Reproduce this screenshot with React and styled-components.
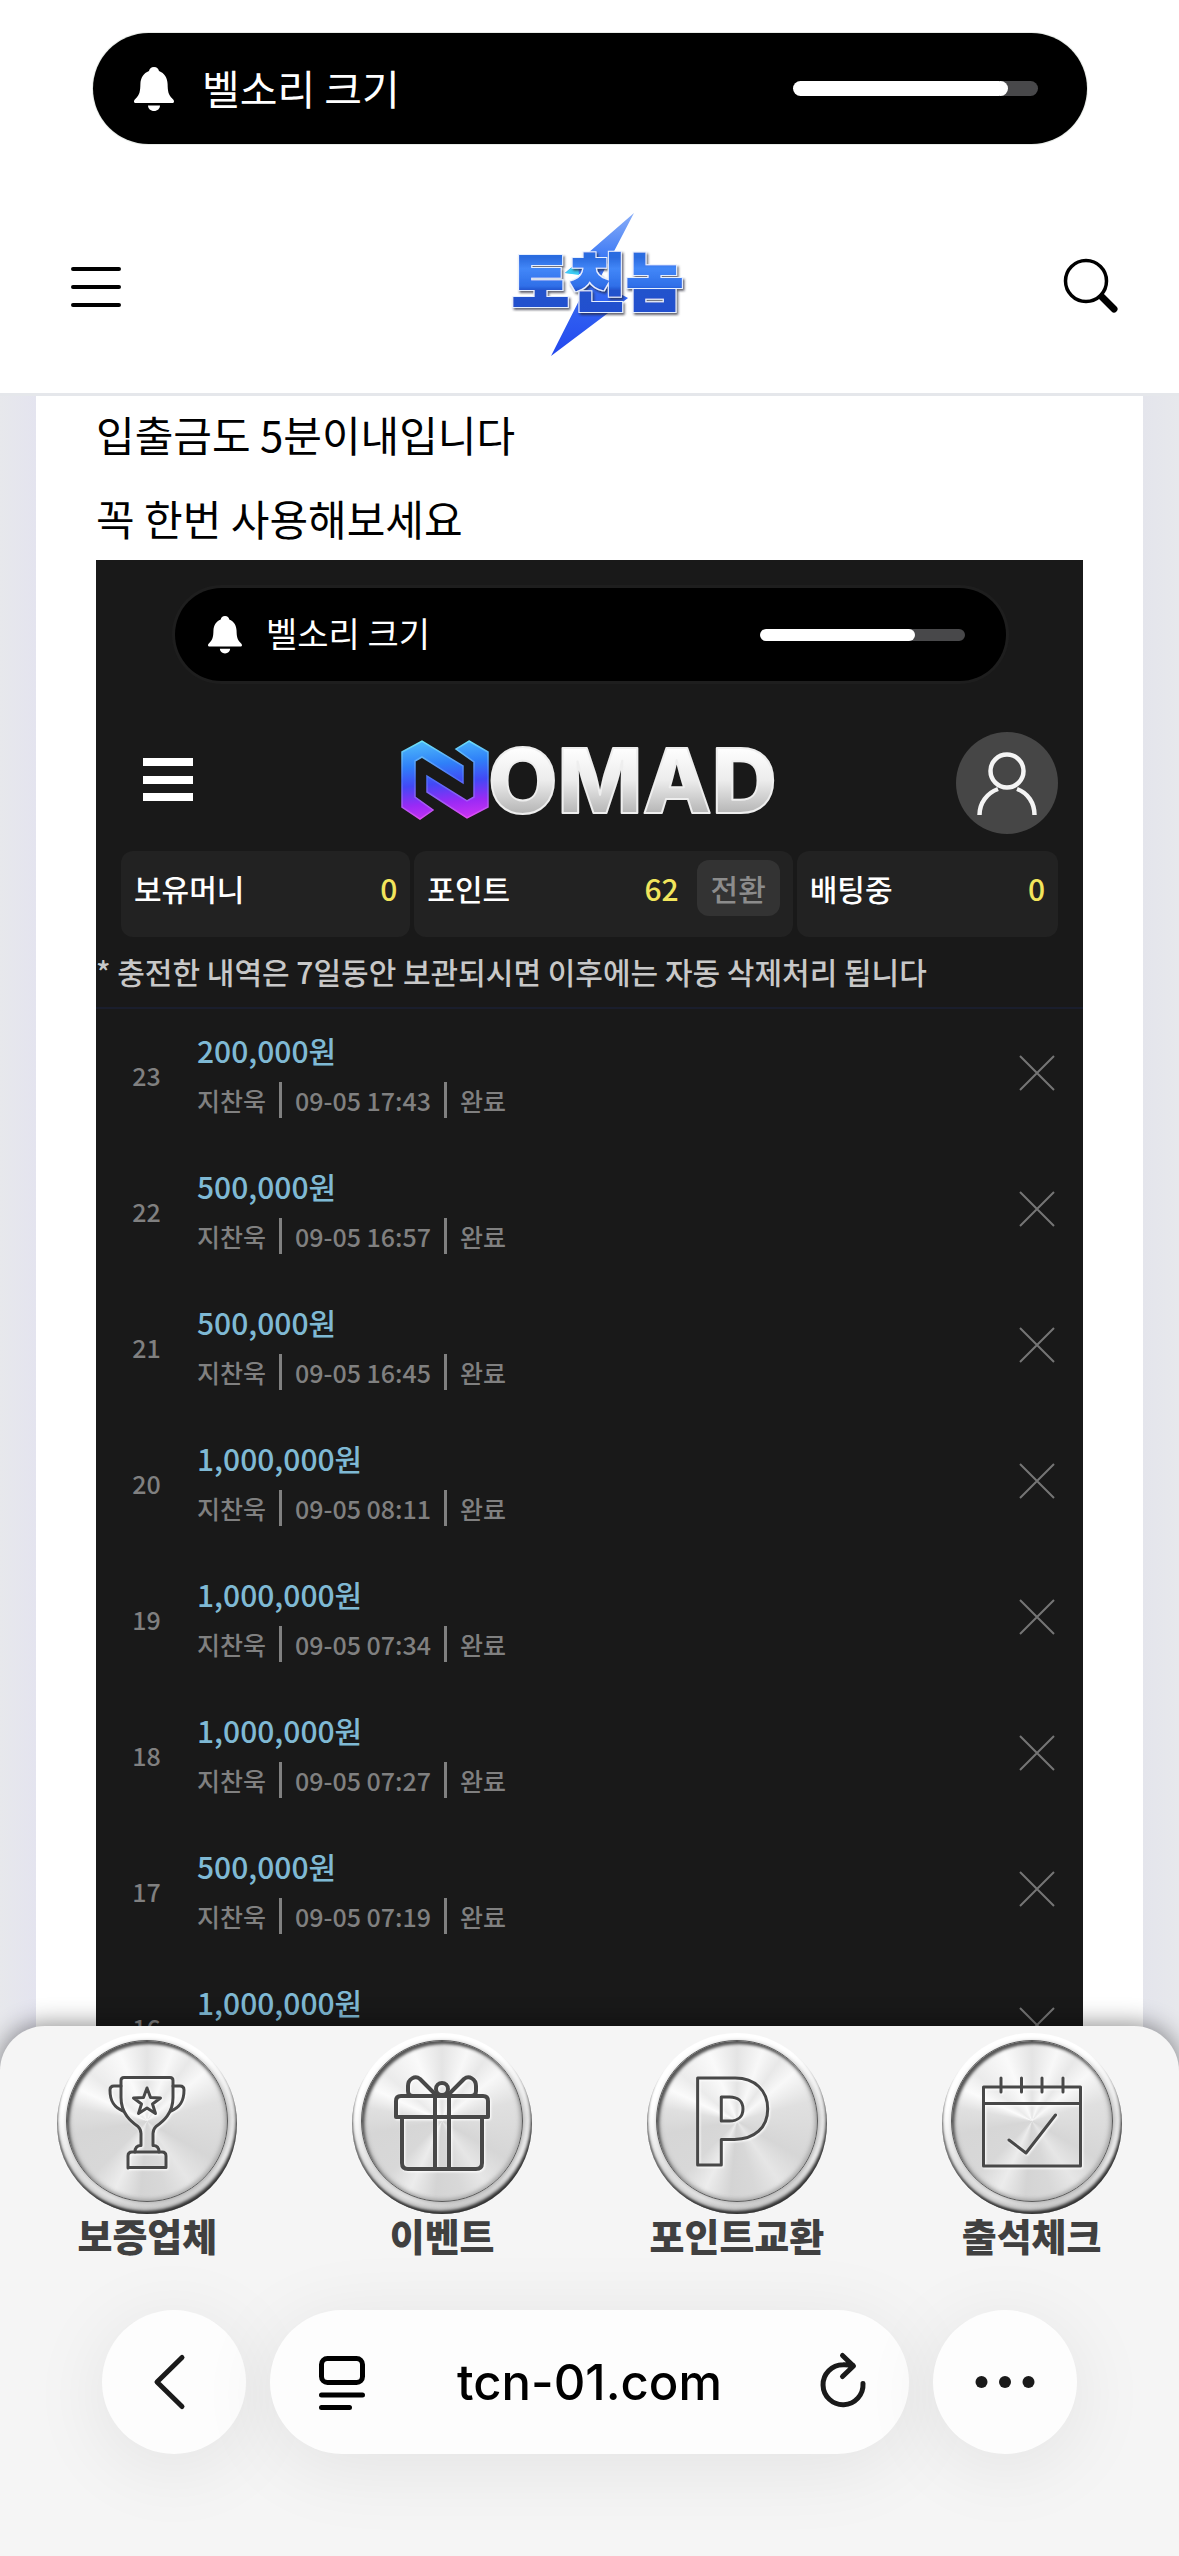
import React, { useState } from 'react'
import styled, { createGlobalStyle } from 'styled-components'

const deposits = [
    { no: 23, amount: '200,000원', date: '09-05 17:43' },
    { no: 22, amount: '500,000원', date: '09-05 16:57' },
    { no: 21, amount: '500,000원', date: '09-05 16:45' },
    { no: 20, amount: '1,000,000원', date: '09-05 08:11' },
    { no: 19, amount: '1,000,000원', date: '09-05 07:34' },
    { no: 18, amount: '1,000,000원', date: '09-05 07:27' },
    { no: 17, amount: '500,000원', date: '09-05 07:19' },
    { no: 16, amount: '1,000,000원', date: '09-05 07:11' },
]

const BellIcon = ({ size }) => (
    <svg width={size} height={size * 1.1} viewBox="0 0 40 44" fill="#fff">
        <path d="M20 0c3 0 4.600 1.800 5 4 5.500 2 8.400 7 8.600 13 .2 7 .6 10.500 4.600 14.500C39.400 32.700 40 33.500 40 34.500S39.200 36 38 36H2c-1.200 0-2-.5-2-1.500s.6-1.800 1.800-3C5.800 27.500 6.200 24 6.400 17 6.600 11 9.500 6 15 4c.4-2.200 2-4 5-4z" />
        <path d="M14 38.500h12c0 3-2.500 5.500-6 5.500s-6-2.500-6-5.500z" />
    </svg>
)

const Ringer = ({ small, initial }) => {
    const [volume, setVolume] = useState(initial)
    return (
        <Pill $small={small}>
            <BellIcon size={small ? 34 : 40} />
            <PillLabel $small={small}>벨소리 크기</PillLabel>
            <Slider
                type="range"
                aria-label="벨소리 크기"
                $small={small}
                value={volume}
                onChange={e => setVolume(Number(e.target.value))}
                style={{ '--volume': volume / 100 }}
            />
        </Pill>
    )
}

const SiteLogo = () => (
    <svg width="200" height="150" viewBox="0 0 200 150" aria-label="토친놈">
        <defs>
            <linearGradient id="bolt" x1="0" y1="0" x2="0" y2="1">
                <stop offset="0" stopColor="#8aaef8" />
                <stop offset="0.3" stopColor="#3f7bf5" />
                <stop offset="1" stopColor="#2348ee" />
            </linearGradient>
            <linearGradient id="word" gradientUnits="userSpaceOnUse" x1="0" y1="47" x2="0" y2="101">
                <stop offset="0" stopColor="#2c6ce0" />
                <stop offset="0.2" stopColor="#4287f8" />
                <stop offset="0.52" stopColor="#2f6fe8" />
                <stop offset="0.6" stopColor="#2252cc" />
                <stop offset="1" stopColor="#2350cf" />
            </linearGradient>
            <filter id="wordEdge" x="-10%" y="-10%" width="120%" height="130%">
                <feMorphology in="SourceAlpha" operator="dilate" radius="1" result="edge" />
                <feFlood floodColor="#e6f0ff" />
                <feComposite in2="edge" operator="in" result="outline" />
                <feMerge result="word">
                    <feMergeNode in="outline" />
                    <feMergeNode in="SourceGraphic" />
                </feMerge>
                <feDropShadow in="word" dx="1.500" dy="2" stdDeviation="0.8" floodColor="#223" floodOpacity="0.7" />
            </filter>
        </defs>
        <path d="M142 2 73 62l27 2-41 81 77-58-30-16z" fill="url(#bolt)" />
        <path d="M86 51 73 62l14 2z" fill="#3ccdf5" />
        <LogoWord x="20" y="95" filter="url(#wordEdge)">토친놈</LogoWord>
    </svg>
)

const NomadLogo = () => (
    <svg width="378" height="90" viewBox="0 0 378 90" aria-label="NOMAD">
        <defs>
            <linearGradient id="mark" gradientUnits="userSpaceOnUse" x1="40" y1="2" x2="48" y2="80">
                <stop offset="0" stopColor="#4db8fb" />
                <stop offset="0.3" stopColor="#2f80f8" />
                <stop offset="0.55" stopColor="#4348f5" />
                <stop offset="0.8" stopColor="#9a2af5" />
                <stop offset="1" stopColor="#c632f2" />
            </linearGradient>
            <linearGradient id="markEdge" gradientUnits="userSpaceOnUse" x1="40" y1="2" x2="44" y2="80">
                <stop offset="0" stopColor="#6fe6f6" />
                <stop offset="0.5" stopColor="#4a6cf8" />
                <stop offset="1" stopColor="#e04cf2" />
            </linearGradient>
            <linearGradient id="steel" gradientUnits="userSpaceOnUse" x1="0" y1="9" x2="0" y2="76">
                <stop offset="0" stopColor="#fff" />
                <stop offset="0.5" stopColor="#ececec" />
                <stop offset="1" stopColor="#b4b4b4" />
            </linearGradient>
        </defs>
        <g fill="url(#mark)" stroke="url(#markEdge)" strokeWidth="1.500">
            <path d="M1 14 21 3l41 25v17L21 19l-7 4v36l18 13-13 9L1 69z" />
            <path d="M68 3l19 11v55L66 80 26 54V38l40 25 7-4V24L55 11z" />
        </g>
        <NomadWord x="87" y="75">OMAD</NomadWord>
    </svg>
)

const TrophyIcon = () => (
    <Engraving viewBox="0 0 160 160">
        <path d="M57 36.500h46q3 0 3 3v17c0 16-10 24-17 29-2 2-3 4-3 7v12q6 0 6 6.500M54 39.500q0-3 3-3M54 39.500v17c0 16 10 24 17 29 2 2 3 4 3 7v12q-6 0-6 6.500" />
        <path d="M54 45h-7q-4 0-4 4c0 10 3 17 13 21M106 45h7q4 0 4 4c0 10-3 17-13 21" />
        <path d="M61 127v-12q0-4 4-4h30q4 0 4 4v11.500H61" />
        <path d="m80 47 3.500 9.500 10 .5-8 6 3 9.500-8.500-5.500-8.500 5.500 3-9.500-8-6 10-.5z" />
    </Engraving>
)

const GiftIcon = () => (
    <Engraving viewBox="0 0 160 160" $bold>
        <path d="M34 76V60q0-5 5-5h82q5 0 5 5v16z" />
        <path d="M40 76v46q0 6 6 6h68q6 0 6-6V76M73 55v73M87 55v73" />
        <path d="M73 53 58 38c-5-4-12 0-12 7v5q0 5 5 5M87 53l15-15c5-4 12 0 12 7v5q0 5-5 5" />
        <circle cx="80" cy="48" r="6" />
    </Engraving>
)

const PointIcon = () => (
    <Engraving viewBox="0 0 160 160">
        <PointLetter x="35" y="124">P</PointLetter>
    </Engraving>
)

const CalendarIcon = () => (
    <Engraving viewBox="0 0 160 160">
        <path d="M31.500 46h97v79h-97zM31.500 62.500h97M49 37v14M69.500 37v14M90 37v14M111 37v14" />
        <path d="m57 99 17 13 29.500-38" />
    </Engraving>
)

const shortcuts = [
    { label: '보증업체', icon: TrophyIcon },
    { label: '이벤트', icon: GiftIcon },
    { label: '포인트교환', icon: PointIcon },
    { label: '출석체크', icon: CalendarIcon },
]

const Deposit = ({ no, amount, date }) => (
    <DepositRow>
        <DepositNo>{no}</DepositNo>
        <div>
            <Amount>{amount}</Amount>
            <Meta>
                <MetaItem>지찬욱</MetaItem>
                <MetaItem>{date}</MetaItem>
                <MetaItem>완료</MetaItem>
            </Meta>
        </div>
        <DeleteButton aria-label={`${no} 삭제`}>
            <svg width="36" height="36" viewBox="0 0 36 36" stroke="#757575" strokeWidth="2">
                <path d="m1 1 34 34M35 1 1 35" />
            </svg>
        </DeleteButton>
    </DepositRow>
)

const App = () => (
    <Screen>
        <GlobalStyle />
        <StatusArea>
            <Ringer initial={87} />
        </StatusArea>
        <SiteHeader>
            <IconButton aria-label="메뉴">
                <svg width="50" height="42" viewBox="0 0 50 42" stroke="#000" strokeWidth="4" strokeLinecap="round">
                    <path d="M2 4h46M2 22h46M2 40h46" />
                </svg>
            </IconButton>
            <SiteLogo />
            <IconButton aria-label="검색">
                <svg width="56" height="56" viewBox="0 0 56 56" fill="none" stroke="#000" strokeLinecap="round">
                    <circle cx="23" cy="23" r="20.500" strokeWidth="3.500" />
                    <path d="m39 39 12 12" strokeWidth="7" />
                </svg>
            </IconButton>
        </SiteHeader>
        <Backdrop>
            <Post>
                <PostLine>입출금도 5분이내입니다</PostLine>
                <PostLine>꼭 한번 사용해보세요</PostLine>
                <Panel>
                    <PillWrap>
                        <Ringer small initial={74} />
                    </PillWrap>
                    <PanelHeader>
                        <IconButton aria-label="메뉴 열기">
                            <svg width="50" height="50" viewBox="0 0 50 50" fill="#fff">
                                <path d="M0 0h50v8H0zM0 18h50v8H0zM0 35h50v8H0z" />
                            </svg>
                        </IconButton>
                        <NomadLogo />
                        <Avatar aria-label="내 정보">
                            <svg width="102" height="102" viewBox="0 0 102 102" fill="none" stroke="#f4f4f4" strokeWidth="4.500">
                                <circle cx="51" cy="39" r="16.500" />
                                <path d="M42 57C31 61 23.500 71 23.500 83M61 57C72 61 78.500 71 78.500 83" />
                            </svg>
                        </Avatar>
                    </PanelHeader>
                    <Balances>
                        <Balance>
                            <span>보유머니</span>
                            <Value>0</Value>
                        </Balance>
                        <Balance>
                            <span>포인트</span>
                            <Value>62</Value>
                            <Convert>전환</Convert>
                        </Balance>
                        <Balance>
                            <span>배팅중</span>
                            <Value>0</Value>
                        </Balance>
                    </Balances>
                    <Notice>* 충전한 내역은 7일동안 보관되시면 이후에는 자동 삭제처리 됩니다</Notice>
                    <DepositList>
                        {deposits.map(item => (
                            <Deposit key={item.no} {...item} />
                        ))}
                    </DepositList>
                </Panel>
            </Post>
        </Backdrop>
        <Dock>
            <Shortcuts>
                {shortcuts.map(({ label, icon: Icon }) => (
                    <Shortcut href="#" key={label}>
                        <Coin>
                            <CoinFace>
                                <Icon />
                            </CoinFace>
                        </Coin>
                        {label}
                    </Shortcut>
                ))}
            </Shortcuts>
            <BrowserBar>
                <RoundButton aria-label="뒤로">
                    <svg width="60" height="60" viewBox="0 0 60 60" fill="none" stroke="#1a1a1a" strokeWidth="5" strokeLinecap="round" strokeLinejoin="round">
                        <path d="M38 5.500 13 30l25 24.500" />
                    </svg>
                </RoundButton>
                <AddressBar>
                    <IconButton aria-label="페이지 메뉴">
                        <svg width="60" height="60" viewBox="0 0 60 60" fill="none" stroke="#000" strokeWidth="5" strokeLinecap="round">
                            <rect x="11.500" y="6.500" width="41" height="24" rx="6" />
                            <path d="M11.500 43h41M11.500 55.500h28" />
                        </svg>
                    </IconButton>
                    <Address type="text" aria-label="주소" defaultValue="tcn-01.com" />
                    <IconButton aria-label="새로고침">
                        <svg width="60" height="60" viewBox="0 0 60 60" fill="none" stroke="#1a1a1a" strokeWidth="5" strokeLinecap="round" strokeLinejoin="round">
                            <path d="M54 31.500A20 20 0 1 1 34 12.700Q39 12.500 44 13.500M33.500 3.500l11 10.500-11 10.500" />
                        </svg>
                    </IconButton>
                </AddressBar>
                <RoundButton aria-label="더보기">
                    <svg width="60" height="60" viewBox="0 0 60 60" fill="#1a1a1a">
                        <circle cx="6.500" cy="30" r="6" />
                        <circle cx="30" cy="30" r="6" />
                        <circle cx="53.500" cy="30" r="6" />
                    </svg>
                </RoundButton>
            </BrowserBar>
        </Dock>
    </Screen>
)

export default App

const GlobalStyle = createGlobalStyle`
    * {
        box-sizing: border-box;
    }

    body {
        margin: 0;
        background-color: #fff;
        color: #000;
        font-family: 'Noto Sans CJK KR', sans-serif;
    }

    button,
    input {
        margin: 0;
        padding: 0;
        border: none;
        background: none;
        font-family: inherit;
        color: inherit;
    }

    svg {
        display: block;
        flex: none;
        overflow: visible;
    }
`

const Screen = styled.div`
    height: 100vh;
    display: flex;
    flex-direction: column;
    overflow: hidden;
`

const StatusArea = styled.div`
    flex: none;
    padding: 33px 92px 36px 93px;
`

const Pill = styled.div`
    display: flex;
    align-items: center;
    height: ${props => (props.$small ? '93px' : '111px')};
    padding: ${props => (props.$small ? '0 41px 0 33px' : '0 49px 0 41px')};
    border-radius: 56px;
    background-color: #000;
    box-shadow: 0 0 0 ${props => (props.$small ? '3px #1e1e1e' : '1px #e8ece8')};
`

const PillLabel = styled.span`
    flex: 1;
    margin-left: ${props => (props.$small ? '24px' : '28px')};
    padding-bottom: 4px;
    font-size: ${props => (props.$small ? '34px' : '41px')};
    line-height: 50px;
    color: #fff;
`

const Slider = styled.input`
    --size: ${props => (props.$small ? '12px' : '15px')};
    appearance: none;
    width: ${props => (props.$small ? '205px' : '245px')};
    height: var(--size);
    border-radius: 8px;
    background: linear-gradient(
        90deg,
        #fff calc((100% - var(--size)) * var(--volume) + 6px),
        #48484a calc((100% - var(--size)) * var(--volume) + 6px)
    );

    &::-webkit-slider-thumb {
        appearance: none;
        width: var(--size);
        height: var(--size);
        border-radius: 50%;
        background-color: #fff;
    }
`

const SiteHeader = styled.header`
    position: relative;
    z-index: 1;
    flex: none;
    display: flex;
    justify-content: space-between;
    align-items: center;
    height: 212px;
    padding: 0 60px 0 71px;
    background-color: #fff;
    box-shadow: 0 1px 0 #fff, 0 4px 0 #e5e7eb;
`

const IconButton = styled.button`
    flex: none;
    cursor: pointer;
`

const LogoWord = styled.text`
    font-size: 62px;
    font-weight: 900;
    fill: url(#word);
    stroke: url(#word);
    stroke-width: 2px;
`

const NomadWord = styled.text`
    font-family: Inter, sans-serif;
    font-size: 90px;
    font-weight: 800;
    fill: url(#steel);
    stroke: #eee;
    stroke-width: 2px;
    stroke-linejoin: round;
`

const Backdrop = styled.main`
    flex: 1;
    min-height: 0;
    padding: 0 36px;
    overflow: hidden;
    background: linear-gradient(90deg, #e7e8ec, #e4e4ef 36px, #e4e5ec calc(100% - 36px), #e7e8ec);
`

const Post = styled.article`
    padding: 0 60px;
    background-color: #fff;
`

const PostLine = styled.p`
    margin: 0;
    font-size: 42px;
    line-height: 84px;
`

const Panel = styled.section`
    padding-top: 28px;
    background-color: #191919;
`

const PillWrap = styled.div`
    padding: 0 77px 0 79px;
`

const PanelHeader = styled.div`
    display: grid;
    grid-template-columns: 1fr auto 1fr;
    align-items: center;
    justify-items: start;
    margin-top: 51px;
    padding: 0 25px 0 25px;

    ${IconButton} {
        margin-left: 22px;
    }
`

const Avatar = styled.button`
    justify-self: end;
    border-radius: 50%;
    background-color: #464646;
`

const Balances = styled.div`
    display: grid;
    grid-template-columns: 289fr 378fr 261fr;
    gap: 4px;
    margin-top: 17px;
    padding: 0 25px;
`

const Balance = styled.div`
    display: flex;
    align-items: center;
    padding: 9px 13px 21px;
    border-radius: 12px;
    background-color: #222;
    font-size: 30px;
    font-weight: 500;
    line-height: 56px;
    color: #fff;
`

const Value = styled.span`
    margin-left: auto;
    color: #f2e55c;
`

const Convert = styled.button`
    width: 83px;
    height: 56px;
    margin-left: 18px;
    border-radius: 12px;
    background-color: #333;
    font-size: 30px;
    font-weight: 500;
    line-height: 56px;
    color: #8c8c8c;
`

const Notice = styled.p`
    margin: 0;
    padding-bottom: 2px;
    border-bottom: 2px solid #1a1e2d;
    font-size: 30px;
    font-weight: 500;
    line-height: 68px;
    white-space: nowrap;
    color: #c8c8c8;
`

const DepositList = styled.ul`
    margin: 0;
    padding: 0;
    list-style: none;
`

const DepositRow = styled.li`
    display: grid;
    grid-template-columns: 101px 1fr auto;
    align-items: center;
    height: 136px;
    padding: 0 28px 4px 0;
    font-size: 25px;
    font-weight: 500;
    color: #808080;
`

const DepositNo = styled.span`
    text-align: center;
`

const Amount = styled.div`
    font-size: 30px;
    line-height: 50px;
    color: #7fb9d4;
`

const Meta = styled.div`
    display: flex;
    align-items: center;
    height: 50px;
    line-height: 36px;
`

const MetaItem = styled.span`
    & + & {
        margin-left: 13px;
        padding-left: 13px;
        border-left: 3px solid #808080;
    }
`

const DeleteButton = styled.button`
    padding-bottom: 4px;
    cursor: pointer;
`

const Dock = styled.footer`
    position: relative;
    z-index: 1;
    flex: none;
    margin-top: -45px;
    padding: 7px 0 102px;
    border-radius: 45px 45px 0 0;
    background-color: #f5f5f5;
    box-shadow: 0 -2px 24px rgba(0, 0, 0, 0.45);
`

const Shortcuts = styled.nav`
    display: grid;
    grid-template-columns: repeat(4, 1fr);
`

const Shortcut = styled.a`
    display: flex;
    flex-direction: column;
    align-items: center;
    font-size: 38px;
    font-weight: 900;
    line-height: 42px;
    text-decoration: none;
    color: #404040;
`

const Coin = styled.span`
    display: flex;
    justify-content: center;
    align-items: center;
    width: 180px;
    height: 181px;
    padding-bottom: 5px;
    border-radius: 50%;
    background: linear-gradient(160deg, #fff 30%, #e6e6e6 60%, #f4f4f4 75%, #bbb 100%);
    box-shadow: inset -2px -4px 3px -1px #333, inset 3px -3px 2px -2px #777, inset 0 -9px 6px -2px #bbb;
`

const CoinFace = styled.span`
    width: 162px;
    height: 162px;
    border: 1px solid #5a5a5a;
    border-radius: 50%;
    background: conic-gradient(
        #e4e4e4,
        #f8f8f8 20deg,
        #e8e8e8 35deg,
        #f8f8f8 50deg,
        #e0e0e0 75deg,
        #d6d6d6 120deg,
        #e6e6e6 145deg,
        #d8d8d8 165deg,
        #d4d4d4 185deg,
        #ececec 205deg,
        #d8d8d8 225deg,
        #d6d6d6 260deg,
        #e0e0e0 280deg,
        #fbfbfb 295deg,
        #ebebeb 310deg,
        #fafafa 338deg,
        #e4e4e4
    );
    box-shadow: inset 2px 3px 3px #555, inset -2px -1px 4px #aaa, inset 2px 0 5px #999, 1px 1px 4px #aaa;
`

const Engraving = styled.svg`
    width: 160px;
    height: 160px;
    fill: none;
    stroke: #484848;
    stroke-width: ${props => (props.$bold ? '4px' : '3px')};
    stroke-linecap: round;
    stroke-linejoin: round;
    filter: drop-shadow(1px 1px 1px #fff);
`

const PointLetter = styled.text`
    font-family: Inter, sans-serif;
    font-size: 120px;
    font-weight: 900;
`

const BrowserBar = styled.div`
    display: flex;
    gap: 24px;
    margin-top: 54px;
    padding: 0 102px;
`

const RoundButton = styled.button`
    display: flex;
    justify-content: center;
    align-items: center;
    width: 144px;
    height: 144px;
    border-radius: 50%;
    background-color: #fdfdfd;
    box-shadow: 0 12px 80px rgba(0, 0, 0, 0.08);
`

const AddressBar = styled.div`
    flex: 1;
    display: flex;
    align-items: center;
    min-width: 0;
    height: 144px;
    padding: 0 40px;
    border-radius: 72px;
    background-color: #fdfdfd;
    box-shadow: 0 12px 80px rgba(0, 0, 0, 0.08);
`

const Address = styled.input`
    flex: 1;
    min-width: 0;
    font-family: Inter, sans-serif;
    font-size: 49px;
    font-weight: 500;
    text-align: center;
    color: #000;
`
